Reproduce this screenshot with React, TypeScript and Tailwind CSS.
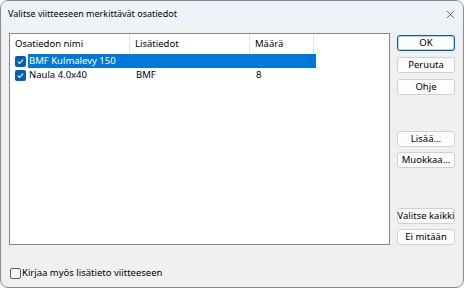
import { X } from "lucide-react";

const font = { fontFamily: "'Segoe UI', 'Noto Sans', 'Liberation Sans', sans-serif" };

function Check({ checked }: { checked: boolean }) {
  return checked ? (
    <span className="flex size-[11px] shrink-0 items-center justify-center rounded-[2px] bg-[#005fb8]">
      <svg viewBox="0 0 10 10" className="size-[9px]" fill="none" stroke="white" strokeWidth="1.2">
        <path d="M2 5.2 L4 7.2 L8 2.8" />
      </svg>
    </span>
  ) : (
    <span className="size-[11px] shrink-0 rounded-[2px] border border-[#5f5f5f] bg-[#f6f6f6]" />
  );
}

function Btn({ label, primary }: { label: string; primary?: boolean }) {
  return (
    <button
      type="button"
      className={`flex h-[16px] w-[58px] items-center justify-center whitespace-nowrap rounded-[3px] bg-[#fdfdfd] text-[9.5px] leading-none text-black ${
        primary ? "border border-[#005fb8] shadow-[inset_0_0_0_1px_#b6cfe9]" : "border border-[#d0d0d0]"
      }`}
    >
      {label}
    </button>
  );
}

const rows = [
  { name: "BMF Kulmalevy 150", info: "", qty: "", selected: true },
  { name: "Naula 4.0x40", info: "BMF", qty: "8", selected: false },
];

export default function App() {
  return (
    <div className="h-[290px] w-[467px] bg-white" style={font}>
      <div className="flex h-[288px] w-[464px] flex-col overflow-hidden rounded-[8px] border border-[#8a8a8a] bg-[#f0f0f0]">
        {/* Title bar */}
        <div className="flex h-[26px] shrink-0 items-center justify-between bg-[#eef3f9] pl-[7px] pr-[6px]">
          <span className="text-[9px] text-black">Valitse viitteeseen merkittävät osatiedot</span>
          <X className="size-[13px] text-[#222]" strokeWidth={1.2} />
        </div>

        <div className="flex flex-1 flex-col px-[8px] pt-[6px]">
          <div className="flex gap-[7px]">
            {/* List */}
            <div className="h-[212px] w-[383px] border border-[#828790] bg-white">
              <div className="flex h-[20px] whitespace-nowrap text-[9.5px] text-black">
                <div className="flex w-[120px] items-center border-r border-[#e5e5e5] pl-[5px]">Osatiedon nimi</div>
                <div className="flex w-[120px] items-center border-r border-[#e5e5e5] pl-[5px]">Lisätiedot</div>
                <div className="flex w-[64px] items-center border-r border-[#e5e5e5] pl-[5px]">Määrä</div>
              </div>
              {rows.map((r) => (
                <div key={r.name} className="flex h-[14px] items-center whitespace-nowrap text-[9.5px] leading-none">
                  <div className="flex h-full items-center pl-[5px] pr-[2px]">
                    <Check checked />
                  </div>
                  <div
                    className={`flex h-full w-[288px] items-center ${
                      r.selected ? "bg-[#0078d7] text-white" : "text-black"
                    }`}
                  >
                    <span className="w-[103px] pl-[1px]">{r.name}</span>
                    <span className="w-[120px] pl-[5px]">{r.info}</span>
                    <span className="w-[64px] pl-[5px]">{r.qty}</span>
                  </div>
                </div>
              ))}
            </div>

            {/* Buttons */}
            <div className="flex flex-col pt-[2px]">
              <div className="flex flex-col gap-[6px]">
                <Btn label="OK" primary />
                <Btn label="Peruuta" />
                <Btn label="Ohje" />
              </div>
              <div className="mt-[36px] flex flex-col gap-[5px]">
                <Btn label="Lisää..." />
                <Btn label="Muokkaa..." />
              </div>
              <div className="mt-[40px] flex flex-col gap-[5px]">
                <Btn label="Valitse kaikki" />
                <Btn label="Ei mitään" />
              </div>
            </div>
          </div>

          <label className="mt-[21px] flex items-center gap-[1px] pl-[1px] text-[9.5px] text-black">
            <Check checked={false} />
            <span>Kirjaa myös lisätieto viitteeseen</span>
          </label>
        </div>
      </div>
    </div>
  );
}
